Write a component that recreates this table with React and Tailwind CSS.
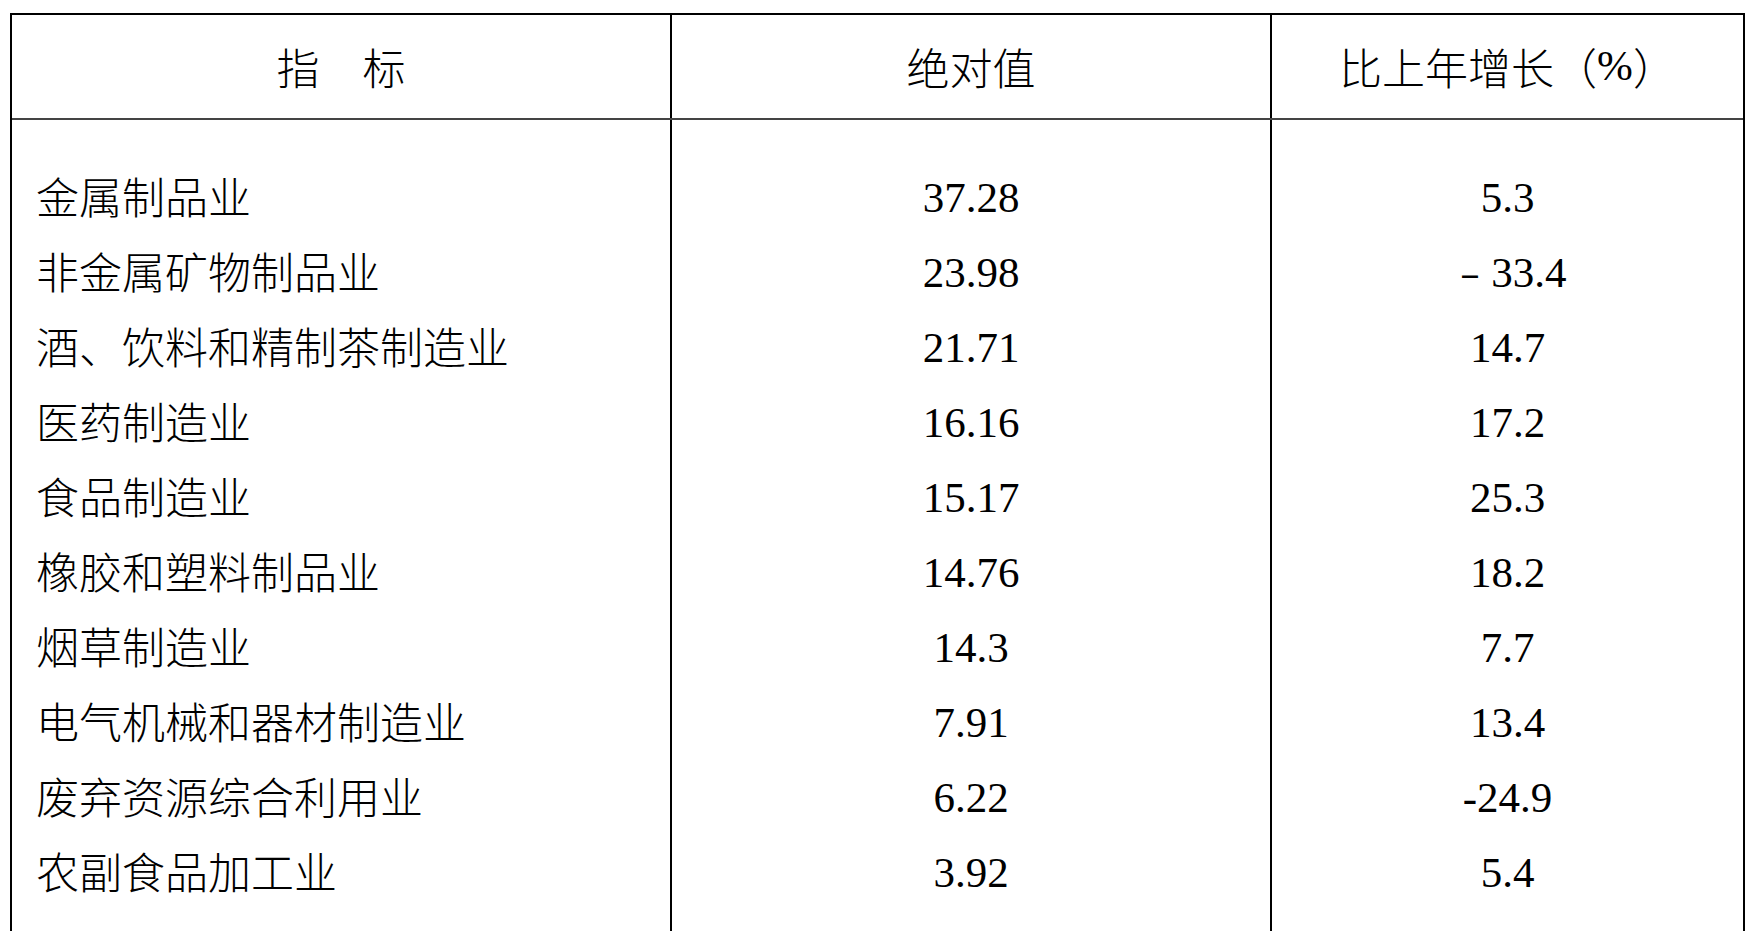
const rows = [
  ["金属制品业", "37.28", "5.3"],
  ["非金属矿物制品业", "23.98", "﹣33.4"],
  ["酒、饮料和精制茶制造业", "21.71", "14.7"],
  ["医药制造业", "16.16", "17.2"],
  ["食品制造业", "15.17", "25.3"],
  ["橡胶和塑料制品业", "14.76", "18.2"],
  ["烟草制造业", "14.3", "7.7"],
  ["电气机械和器材制造业", "7.91", "13.4"],
  ["废弃资源综合利用业", "6.22", "-24.9"],
  ["农副食品加工业", "3.92", "5.4"],
];

const cjk = "font-['Noto_Sans_CJK_SC',sans-serif] font-light";
const num = "font-['Liberation_Serif','Noto_Sans_CJK_SC',serif]";

function App() {
  return (
    <div className="h-[931px] overflow-hidden bg-white pt-[13px] pl-[10px] text-black">
      <div className="w-[1735px] border-2 border-black text-[43px]">
        <div className="grid grid-cols-[660px_600px_471px] h-[105px] border-b-2 border-[#444]">
          <div className={`flex items-center justify-center border-r-2 border-black ${cjk}`}>
            指　标
          </div>
          <div className={`flex items-center justify-center border-r-2 border-black ${cjk}`}>
            绝对值
          </div>
          <div className={`flex items-center justify-center ${cjk}`}>
            比上年增长（<span className={num}>%</span>）
          </div>
        </div>

        <div className="grid grid-cols-[660px_600px_471px] h-[40px]">
          <div className="border-r-2 border-black"></div>
          <div className="border-r-2 border-black"></div>
          <div></div>
        </div>

        {rows.map((r) => (
          <div key={r[0]} className="grid grid-cols-[660px_600px_471px] h-[75px] leading-[75px]">
            <div className={`border-r-2 border-black pl-6 whitespace-nowrap ${cjk}`}>
              <span className="relative top-[-2px]">{r[0]}</span>
            </div>
            <div className={`border-r-2 border-black text-center ${num}`}>{r[1]}</div>
            <div className={`text-center ${num}`}>{r[2]}</div>
          </div>
        ))}

        <div className="grid grid-cols-[660px_600px_471px] h-[80px]">
          <div className="border-r-2 border-black"></div>
          <div className="border-r-2 border-black"></div>
          <div></div>
        </div>
      </div>
    </div>
  );
}

export default App;
